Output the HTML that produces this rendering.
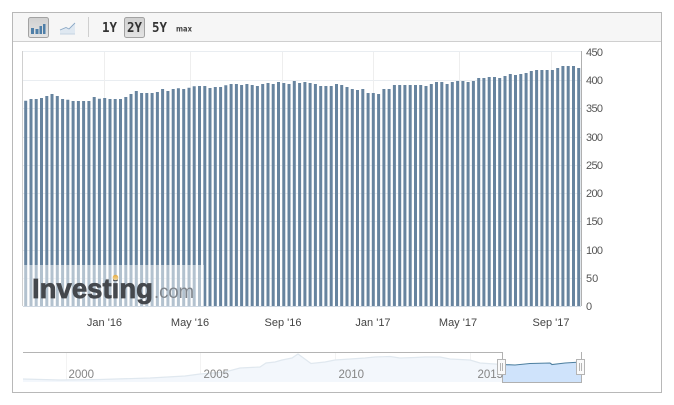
<!DOCTYPE html>
<html><head><meta charset="utf-8"><style>
html,body{margin:0;padding:0;background:#fff}
svg{display:block}
text{font-family:"Liberation Sans",sans-serif}
</style></head><body>
<svg width="674" height="405" viewBox="0 0 674 405" xmlns="http://www.w3.org/2000/svg">
<defs>
<linearGradient id="g" x1="0" y1="0" x2="0" y2="1"><stop offset="0" stop-color="#d0d0d0"/><stop offset="1" stop-color="#e4e4e4"/></linearGradient>
<linearGradient id="o" x1="0" y1="0" x2="0" y2="1"><stop offset="0" stop-color="#e3a93f"/><stop offset="1" stop-color="#f3d9a0"/></linearGradient>
</defs>
<rect width="674" height="405" fill="#fff"/>
<rect x="12.5" y="12.5" width="649" height="380" fill="#fff" stroke="#b8b8b8"/>
<rect x="13" y="13" width="648" height="28" fill="#f6f6f6"/>
<path d="M13 41.500H661" stroke="#cfcfcf"/>
<!-- toolbar -->
<rect x="28.500" y="17.500" width="20" height="20" rx="2" fill="url(#g)" stroke="#a2a2a2"/>
<path d="M31 28h3v6h-3zM35.500 29h3v5h-3zM39.500 26h2.500v8h-2.500zM43 24h2.500v10H43z" fill="#4f7fa8"/>
<path d="M60 34V30L66 27.500 69 29 75 23V34Z" fill="#dfe8f1"/>
<path d="M60 30L66 27.500 69 29 75 23" fill="none" stroke="#8aa8c6" stroke-width=".9"/>
<path d="M60 34H75" stroke="#c4d3e1"/>
<path d="M88.500 17V37" stroke="#cfcfcf"/>
<rect x="124.500" y="17.500" width="20" height="20" rx="2" fill="url(#g)" stroke="#a2a2a2"/>
<g font-size="13" fill="#333">
<text x="102" y="32" style="font-family:'DejaVu Sans Mono',monospace" font-weight="bold" textLength="15" lengthAdjust="spacingAndGlyphs">1Y</text>
<text x="127" y="32" style="font-family:'DejaVu Sans Mono',monospace" font-weight="bold" textLength="15" lengthAdjust="spacingAndGlyphs">2Y</text>
<text x="152" y="32" style="font-family:'DejaVu Sans Mono',monospace" font-weight="bold" textLength="15" lengthAdjust="spacingAndGlyphs">5Y</text>
</g>
<text x="176" y="31.500" font-size="8" font-weight="bold" fill="#444" textLength="16" style="font-family:'DejaVu Sans',sans-serif" lengthAdjust="spacingAndGlyphs">max</text>
<!-- grid -->
<path d="M23 51.500H581M23 80.500H581M23 108.500H581M23 137.500H581M23 165.500H581M23 193.500H581M23 221.500H581M23 250.500H581M23 278.500H581" stroke="#e9edf1"/>
<path d="M104.500 52V306M190.500 52V306M282.500 52V306M373.500 52V306M459.500 52V306M551.500 52V306" stroke="#eeeeee"/>
<path d="M22.500 51V306" stroke="#d0d0d0"/>
<path d="M581.500 51V306" stroke="#b0b0b0"/>
<!-- bars -->
<path fill="none" stroke="#67849f" stroke-width="3" d="M25.700 306V100.700M31 306V99M36.200 306V99M41.500 306V98M46.800 306V96M52 306V94M57.300 306V96M62.600 306V99M67.800 306V99.700M73.100 306V101M78.400 306V101M83.600 306V101M88.900 306V101M94.200 306V97M99.400 306V98.700M104.700 306V98M110 306V99M115.200 306V99M120.500 306V99M125.800 306V97M131 306V94M136.300 306V91M141.600 306V93M146.800 306V93M152.100 306V93M157.400 306V92M162.600 306V89M167.900 306V91M173.200 306V89M178.400 306V88.300M183.700 306V89M189 306V87.700M194.200 306V86.300M199.500 306V86M204.800 306V86M210 306V88M215.300 306V87M220.600 306V87M225.800 306V85.300M231.100 306V84M236.400 306V84M241.600 306V85M246.900 306V84M252.200 306V85M257.400 306V86M262.700 306V84M268 306V83M273.200 306V84M278.500 306V82M283.800 306V83M289 306V84M294.300 306V81M299.600 306V83M304.900 306V82M310.100 306V83M315.400 306V84M320.700 306V86M325.900 306V86M331.200 306V86M336.500 306V84M341.700 306V85M347 306V87M352.300 306V89M357.500 306V90M362.800 306V89M368.100 306V93M373.300 306V93M378.600 306V94M383.900 306V89M389.100 306V89M394.400 306V85M399.700 306V85M404.900 306V85M410.200 306V85M415.500 306V85M420.700 306V85M426 306V86M431.300 306V84M436.500 306V82M441.800 306V82M447.100 306V84M452.300 306V82M457.600 306V81M462.900 306V81M468.100 306V82M473.400 306V81M478.700 306V78M483.900 306V78M489.200 306V77M494.500 306V77M499.700 306V78M505 306V76M510.300 306V74M515.500 306V75M520.800 306V74M526.100 306V73M531.300 306V71M536.600 306V70M541.900 306V70M547.100 306V70M552.400 306V70M557.700 306V68M562.900 306V66M568.200 306V66M573.500 306V66M578.700 306V68"/>
<path d="M23 306.500H581" stroke="#cfd8e2"/>
<!-- watermark -->
<rect x="23" y="265" width="181" height="41" fill="#fff" fill-opacity=".5"/>
<text x="32" y="298" font-size="28" font-weight="bold" fill="#45484d" stroke="#45484d" stroke-width=".7" textLength="121" lengthAdjust="spacingAndGlyphs">Investing</text>
<circle cx="115.500" cy="277.500" r="2.800" fill="url(#o)"/>
<text x="154" y="298" font-size="19" fill="#80858b" textLength="40" lengthAdjust="spacingAndGlyphs">.com</text>
<!-- y labels -->
<g font-size="11" fill="#555">
<text x="586" y="56" textLength="17">450</text><text x="586" y="84" textLength="17">400</text><text x="586" y="112" textLength="17">350</text><text x="586" y="141" textLength="17">300</text><text x="586" y="169" textLength="17">250</text><text x="586" y="197" textLength="17">200</text><text x="586" y="225" textLength="17">150</text><text x="586" y="254" textLength="17">100</text><text x="586" y="282">50</text><text x="586" y="310">0</text>
</g>
<!-- x labels -->
<g font-size="11" fill="#444" text-anchor="middle">
<text x="104.500" y="326">Jan '16</text><text x="190" y="326">May '16</text><text x="283" y="326">Sep '16</text><text x="373" y="326">Jan '17</text><text x="458" y="326">May '17</text><text x="551" y="326">Sep '17</text>
</g>
<!-- navigator -->
<path d="M66.500 353V381M200.500 353V381M335.500 353V381M470.500 353V381" stroke="#f3f3f3"/>
<path d="M23 379L60 380 100 379.500 150 378 185 376 200 374 225 372 240 368 260 367 266 363 275 362 282 360 292 358 298 354 311 363.500 325 362 335 360 350 359 365 358 375 357 390 356.500 400 358 415 357.500 425 357 440 357 450 359 470 360 480 363 495 364 502 364.500V382H23Z" fill="#f3f7fc"/>
<path d="M23 379L60 380 100 379.500 150 378 185 376 200 374 225 372 240 368 260 367 266 363 275 362 282 360 292 358 298 354 311 363.500 325 362 335 360 350 359 365 358 375 357 390 356.500 400 358 415 357.500 425 357 440 357 450 359 470 360 480 363 495 364 502 364.500" fill="none" stroke="#e0e8ef" stroke-width="1.200"/>
<path d="M23 352.500H502" stroke="#b4b4b4"/>
<path d="M502 364.500L515 365 530 363.500 550 363 552 364.500 565 363 581 362V382H502Z" fill="#cfe3fb"/>
<path d="M502 364.500L515 365 530 363.500 550 363 552 364.500 565 363 581 362" fill="none" stroke="#4d7f9f" stroke-width="1.100"/>
<path d="M502.500 352V382.500H581.500V352" fill="none" stroke="#b0b0b0"/>
<g font-size="11.500" fill="#858585">
<text x="68.500" y="378">2000</text><text x="203.500" y="378">2005</text><text x="338.500" y="378">2010</text><text x="477.500" y="378">2015</text>
</g>
<g fill="#fafafa" stroke="#b4b4b4">
<rect x="497.500" y="359.500" width="8" height="15"/>
<rect x="576.500" y="359.500" width="8" height="15"/>
</g>
<path d="M500.500 363V371M502.500 363V371M579.500 363V371M581.500 363V371" stroke="#b4b4b4"/>
</svg>
</body></html>
